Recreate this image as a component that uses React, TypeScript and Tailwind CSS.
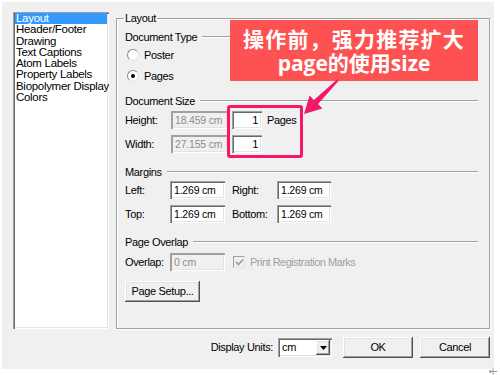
import React from "react";

const sunken =
  "bg-white shadow-[inset_1px_1px_0_#a0a0a0,inset_2px_2px_0_#696969,inset_-1px_-1px_0_#ffffff,inset_-2px_-2px_0_#e3e3e3]";
const sunkenDisabled =
  "bg-[#f0f0f0] shadow-[inset_1px_1px_0_#a0a0a0,inset_2px_2px_0_#a0a0a0,inset_-1px_-1px_0_#ffffff,inset_-2px_-2px_0_#e3e3e3] text-[#8d8d8d]";
const raised =
  "bg-[#f0f0f0] shadow-[inset_-1px_-1px_0_#505050,inset_1px_1px_0_#ffffff,inset_-2px_-2px_0_#a0a0a0,inset_2px_2px_0_#e3e3e3]";
const field = "text-[10.5px] tracking-[-0.2px] whitespace-nowrap overflow-hidden";

function Header({ text, mt }: { text: string; mt: string }) {
  return (
    <div className={`flex items-center h-[14px] ${mt}`}>
      <span className="whitespace-nowrap">{text}</span>
      <div className="flex-1 ml-[5px] h-[2px] border-t border-t-[#a0a0a0] border-b border-b-white" />
    </div>
  );
}

function Radio({ checked, label, mt }: { checked: boolean; label: string; mt: string }) {
  return (
    <div className={`flex items-center h-[14px] ${mt}`}>
      <div className="ml-[2px] w-[12px] h-[12px] rounded-full bg-white border border-t-[#8a8a8a] border-l-[#8a8a8a] border-b-[#e3e3e3] border-r-[#e3e3e3] flex items-center justify-center">
        {checked && <div className="w-[4px] h-[4px] rounded-full bg-black" />}
      </div>
      <span className="ml-[5px]">{label}</span>
    </div>
  );
}

export default function App() {
  const list = [
    "Layout",
    "Header/Footer",
    "Drawing",
    "Text Captions",
    "Atom Labels",
    "Property Labels",
    "Biopolymer Display",
    "Colors",
  ];
  return (
    <div className="relative w-[500px] h-[375px] bg-white pt-[2px] pl-[2px] font-['Liberation_Sans',Arial,sans-serif] text-[11px] tracking-[-0.35px] text-black leading-[13px]">
      <div className="w-[492px] h-[367px] bg-[#f0f0f0] pt-[10px] pl-[11px] flex flex-col">
        <div className="flex items-start gap-[7px]">
          {/* list box */}
          <div className={`w-[96px] h-[317px] ${sunken} p-[2px] pt-[1px] overflow-hidden`}>
            <div className="flex flex-col text-[11.5px] leading-[11.3px] tracking-[-0.3px]">
              {list.map((t, i) => (
                <div
                  key={t}
                  className={`pl-[1px] whitespace-nowrap ${
                    i === 0 ? "bg-[#3399ff] text-white" : ""
                  }`}
                >
                  {t}
                </div>
              ))}
            </div>
          </div>

          {/* group box */}
          <fieldset className="w-[374px] h-[317px] border border-[#a0a0a0] shadow-[inset_1px_1px_0_#ffffff,1px_1px_0_#ffffff] pl-[8px] pr-[11px] flex flex-col">
            <legend className="ml-[-1px] px-[1px] leading-[13px]">Layout</legend>

            <Header text="Document Type" mt="mt-[5px]" />
            <Radio checked={false} label="Poster" mt="mt-[4px]" />
            <Radio checked={true} label="Pages" mt="mt-[7px]" />

            <Header text="Document Size" mt="mt-[11px]" />
            <div className="flex items-center h-[18px] mt-[3px]">
              <span className="w-[46px]">Height:</span>
              <div className={`w-[57px] h-[18px] ${sunkenDisabled} ${field} pl-[4px] flex items-center`}>18.459 cm</div>
              <div className={`ml-[4px] w-[30px] h-[18px] ${sunken} pr-[4px] flex items-center justify-end`}>1</div>
              <span className="ml-[5px]">Pages</span>
            </div>
            <div className="flex items-center h-[18px] mt-[6px]">
              <span className="w-[46px]">Width:</span>
              <div className={`w-[57px] h-[18px] ${sunkenDisabled} ${field} pl-[4px] flex items-center`}>27.155 cm</div>
              <div className={`ml-[4px] w-[30px] h-[18px] ${sunken} pr-[4px] flex items-center justify-end`}>1</div>
            </div>

            <Header text="Margins" mt="mt-[12px]" />
            <div className="flex items-center h-[18px] mt-[2px]">
              <span className="w-[45px]">Left:</span>
              <div className={`w-[55px] h-[18px] ${sunken} ${field} pl-[4px] flex items-center`}>1.269 cm</div>
              <span className="ml-[7px] w-[45px]">Right:</span>
              <div className={`w-[54px] h-[18px] ${sunken} ${field} pl-[4px] flex items-center`}>1.269 cm</div>
            </div>
            <div className="flex items-center h-[18px] mt-[6px]">
              <span className="w-[45px]">Top:</span>
              <div className={`w-[55px] h-[18px] ${sunken} ${field} pl-[4px] flex items-center`}>1.269 cm</div>
              <span className="ml-[7px] w-[45px]">Bottom:</span>
              <div className={`w-[54px] h-[18px] ${sunken} ${field} pl-[4px] flex items-center`}>1.269 cm</div>
            </div>

            <Header text="Page Overlap" mt="mt-[12px]" />
            <div className="flex items-center h-[18px] mt-[4px]">
              <span className="w-[45px]">Overlap:</span>
              <div className={`w-[55px] h-[18px] ${sunkenDisabled} ${field} pl-[4px] flex items-center`}>0 cm</div>
              <div className="ml-[8px] w-[12px] h-[12px] bg-[#f0f0f0] border border-t-[#a0a0a0] border-l-[#a0a0a0] border-b-[#e3e3e3] border-r-[#e3e3e3] flex items-center justify-center">
                <svg width="9" height="8" viewBox="0 0 9 8">
                  <path d="M1 4 L3.5 6.5 L8 1.5" stroke="#a0a0a0" strokeWidth="1.8" fill="none" />
                </svg>
              </div>
              <span className="ml-[5px] text-[#a0a0a0] tracking-[-0.5px]">Print Registration Marks</span>
            </div>

            <div className="mt-[10px]">
              <div className={`w-[75px] h-[21px] ${raised} flex items-center justify-center`}>Page Setup...</div>
            </div>
          </fieldset>
        </div>

        {/* bottom row */}
        <div className="mt-[8px] w-[477px] flex items-center justify-end h-[21px]">
          <span>Display Units:</span>
          <div className={`ml-[5px] w-[54px] h-[19px] ${sunken} flex items-center pl-[4px] pr-[2px]`}>
            <span className="flex-1">cm</span>
            <div className={`w-[14px] h-[15px] ${raised} flex items-center justify-center`}>
              <svg width="7" height="4" viewBox="0 0 7 4">
                <path d="M0 0 H7 L3.5 4 Z" fill="#000" />
              </svg>
            </div>
          </div>
          <div className={`ml-[11px] w-[70px] h-[21px] ${raised} flex items-center justify-center`}>OK</div>
          <div className={`ml-[7px] w-[70px] h-[21px] ${raised} flex items-center justify-center`}>Cancel</div>
        </div>
      </div>

      {/* red callout annotation */}
      <div className="absolute left-[230px] top-[20px] w-[248px] h-[61px] bg-[#fe5252] flex flex-col items-center justify-center text-white font-bold font-['Noto_Sans_CJK_SC',sans-serif] text-[21px] leading-[25px] tracking-[1.2px]">
        <div>操作前，强力推荐扩大</div>
        <div className="font-['Open_Sans','Noto_Sans_CJK_SC',sans-serif] tracking-[0px]">page的使用size</div>
      </div>

      {/* pink highlight box */}
      <div className="absolute left-[227px] top-[105px] w-[76px] h-[53px] border-[3px] border-[#f5186a] rounded-[3px]" />

      {/* arrow */}
      <svg className="absolute left-[300px] top-[76px]" width="42" height="42" viewBox="300 76 42 42">
        <polygon
          points="304,114 309.6,95.6 313.9,99.9 337.3,79.3 338.7,80.7 318.1,104.1 322.4,108.4"
          fill="#f5186a"
        />
      </svg>

      {/* tiny corner glyph */}
      <svg className="absolute left-[488px] top-[368px]" width="10" height="7" viewBox="0 0 10 7">
        <path d="M1 3.5 H9 M5 0.5 V6.5 M1 3.5 L3 2 M1 3.5 L3 5" stroke="#9a9a9a" strokeWidth="1" fill="none" />
      </svg>
    </div>
  );
}
